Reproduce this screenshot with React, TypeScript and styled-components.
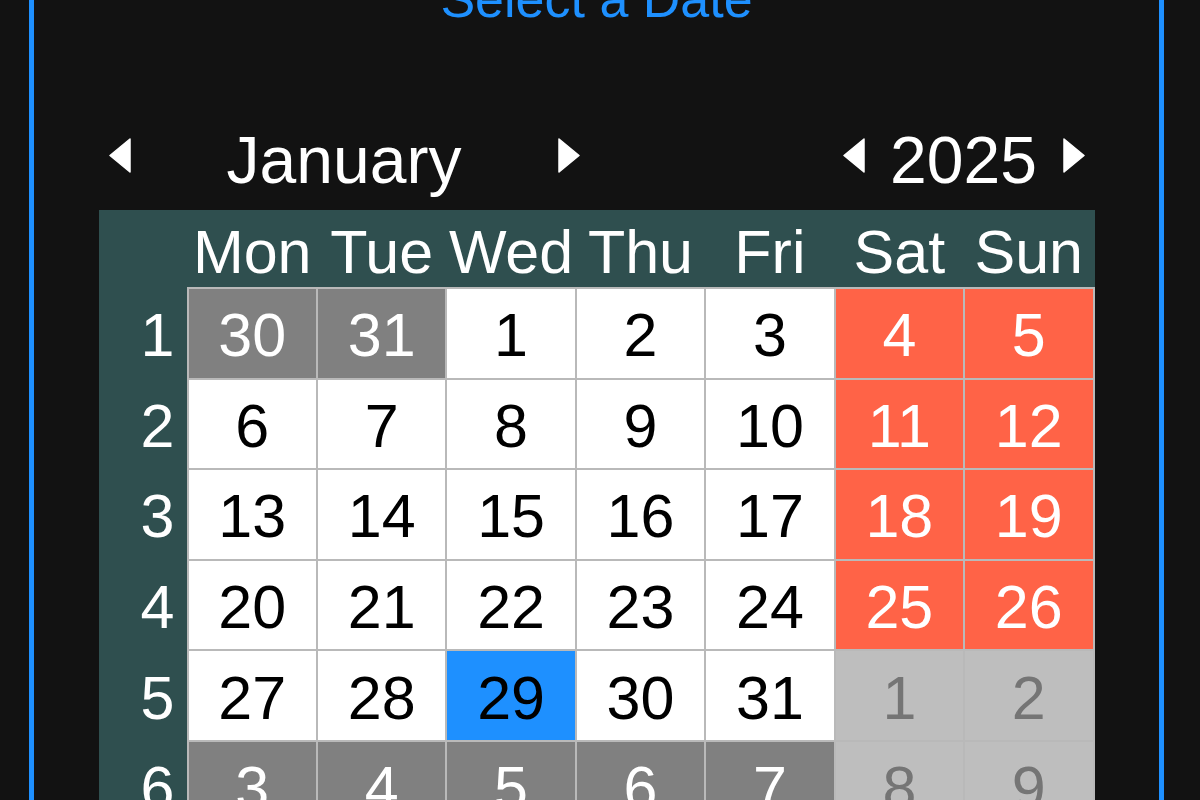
import * as React from 'react';
import styled, { createGlobalStyle } from 'styled-components';

const GlobalStyle = createGlobalStyle`
  html, body {
    margin: 0;
    padding: 0;
    background: #121212;
    overflow: hidden;
  }
  body {
    font-family: "Liberation Sans", Arial, sans-serif;
  }
`;

const Frame = styled.div`
  box-sizing: border-box;
  margin-left: 29px;
  width: 1135px;
  min-height: 900px;
  border-left: 5px solid #1e90ff;
  border-right: 5px solid #1e90ff;
  display: flex;
  flex-direction: column;
  align-items: center;
`;

const Title = styled.div`
  margin-top: -31px;
  font-size: 52px;
  color: #1e90ff;
  line-height: normal;
  width: 100%;
  text-align: center;
`;

const Calendar = styled.div`
  margin-top: 93px;
  width: 996px;
  display: flex;
  flex-direction: column;
`;

const NavBar = styled.div`
  display: flex;
  justify-content: space-between;
  align-items: center;
  padding: 0 10px;
  height: 76px;
  margin-bottom: 12px;
`;

const NavGroup = styled.div`
  display: flex;
  align-items: center;
`;

const NavLabel = styled.div<{ $width: number }>`
  width: ${p => p.$width}px;
  text-align: center;
  font-size: 66px;
  color: #ffffff;
  line-height: 76px;
`;

const ArrowButton = styled.div`
  width: 22px;
  height: 35px;
  margin-bottom: 9px;
  display: flex;
`;

const Sheet = styled.div`
  background: #2f4f4f;
  display: grid;
  grid-template-columns: 88px 1fr;
  grid-template-rows: 77px auto;
`;

const DayHeaders = styled.div`
  display: grid;
  grid-template-columns: repeat(7, 1fr);
  column-gap: 2px;
  padding: 0 2px;
`;

const DayHeader = styled.div`
  display: flex;
  align-items: center;
  justify-content: center;
  padding-top: 6px;
  font-size: 61px;
  color: #ffffff;
  white-space: nowrap;
`;

const WeekColumn = styled.div`
  display: grid;
  grid-auto-rows: 88.6px;
  row-gap: 2px;
  padding: 2px 0 2px 30px;
`;

const WeekNumber = styled.div`
  display: flex;
  align-items: center;
  justify-content: center;
  padding-top: 4px;
  font-size: 61px;
  color: #ffffff;
`;

const DaysGrid = styled.div`
  background: #b9b9b9;
  display: grid;
  grid-template-columns: repeat(7, 1fr);
  grid-auto-rows: 88.6px;
  gap: 2px;
  padding: 2px;
`;

type DayKind = 'normal' | 'weekend' | 'other' | 'otherWeekend' | 'selected';

const dayColors: Record<DayKind, { bg: string; fg: string }> = {
  normal: { bg: '#ffffff', fg: '#000000' },
  weekend: { bg: '#ff6347', fg: '#ffffff' },
  other: { bg: '#808080', fg: '#ffffff' },
  otherWeekend: { bg: '#bebebe', fg: '#757575' },
  selected: { bg: '#1e90ff', fg: '#000000' },
};

const DayCell = styled.div<{ $kind: DayKind }>`
  display: flex;
  align-items: center;
  justify-content: center;
  padding-top: 4px;
  font-size: 61px;
  background: ${p => dayColors[p.$kind].bg};
  color: ${p => dayColors[p.$kind].fg};
`;

const Arrow = ({ dir }: { dir: 'left' | 'right' }) => (
  <ArrowButton>
    <svg width="22" height="35" viewBox="0 0 22 35">
      {dir === 'left' ? (
        <polygon points="1,17.5 21,1 21,34" fill="#ffffff" stroke="#ffffff" strokeLinejoin="round" strokeWidth="1.5" />
      ) : (
        <polygon points="21,17.5 1,1 1,34" fill="#ffffff" stroke="#ffffff" strokeLinejoin="round" strokeWidth="1.5" />
      )}
    </svg>
  </ArrowButton>
);

const weekdays = ['Mon', 'Tue', 'Wed', 'Thu', 'Fri', 'Sat', 'Sun'];

const buildWeeks = () => {
  const weeks: { day: number; kind: DayKind }[][] = [];
  // January 2025 starts on a Wednesday; the sheet starts on Monday 30 Dec
  let current = new Date(2024, 11, 30);
  for (let w = 0; w < 6; w++) {
    const row: { day: number; kind: DayKind }[] = [];
    for (let d = 0; d < 7; d++) {
      const inMonth = current.getMonth() === 0;
      const weekend = d >= 5;
      let kind: DayKind = 'normal';
      if (!inMonth) kind = weekend ? 'otherWeekend' : 'other';
      else if (current.getDate() === 29) kind = 'selected';
      else if (weekend) kind = 'weekend';
      row.push({ day: current.getDate(), kind });
      current = new Date(current.getFullYear(), current.getMonth(), current.getDate() + 1);
    }
    weeks.push(row);
  }
  return weeks;
};

export default function App(): JSX.Element {
  const weeks = buildWeeks();

  return (
    <>
      <GlobalStyle />
      <Frame>
        <Title>Select a Date</Title>
        <Calendar>
          <NavBar>
            <NavGroup>
              <Arrow dir="left" />
              <NavLabel $width={427}>January</NavLabel>
              <Arrow dir="right" />
            </NavGroup>
            <NavGroup>
              <Arrow dir="left" />
              <NavLabel $width={198}>2025</NavLabel>
              <Arrow dir="right" />
            </NavGroup>
          </NavBar>
          <Sheet>
            <div />
            <DayHeaders>
              {weekdays.map(name => (
                <DayHeader key={name}>{name}</DayHeader>
              ))}
            </DayHeaders>
            <WeekColumn>
              {weeks.map((_, i) => (
                <WeekNumber key={i}>{i + 1}</WeekNumber>
              ))}
            </WeekColumn>
            <DaysGrid>
              {weeks.flat().map((cell, i) => (
                <DayCell key={i} $kind={cell.kind}>{cell.day}</DayCell>
              ))}
            </DaysGrid>
          </Sheet>
        </Calendar>
      </Frame>
    </>
  );
}
